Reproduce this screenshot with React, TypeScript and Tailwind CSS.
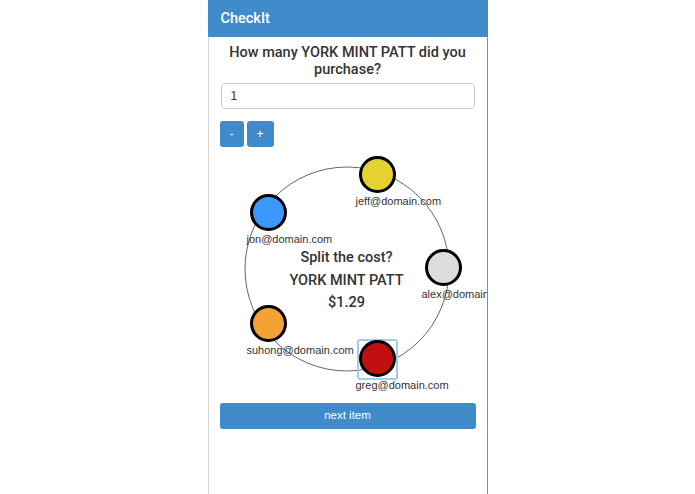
import React from 'react';

type Person = {
  email: string;
  color: string;
  left: number;
  top: number;
  selected?: boolean;
};

const PEOPLE: Person[] = [
  { email: 'jeff@domain.com', color: '#e5d231', left: 150, top: 1 },
  { email: 'jon@domain.com', color: '#3b99fb', left: 41, top: 39 },
  { email: 'alex@domain.com', color: '#dcdcdc', left: 216, top: 94 },
  { email: 'suhong@domain.com', color: '#f4a236', left: 41, top: 150 },
  { email: 'greg@domain.com', color: '#c20f0f', left: 150, top: 185, selected: true },
];

function PersonNode({ person }: { person: Person }) {
  return (
    <>
      {person.selected && (
        <div
          className="absolute h-[41px] w-[41px] rounded-[3px] border-2 border-[#a7c9ec]"
          style={{ left: person.left - 2, top: person.top - 1 }}
        />
      )}
      <div
        className="absolute h-[37px] w-[37px] rounded-full border-[3px] border-black"
        style={{ left: person.left, top: person.top, backgroundColor: person.color }}
      />
      <div
        className="absolute whitespace-nowrap text-[11px] leading-[13px] text-[#333]"
        style={{ left: person.left - 3, top: person.top + 39 }}
      >
        {person.email}
      </div>
    </>
  );
}

export default function App() {
  return (
    <div className="mx-auto flex min-h-screen w-[280px] flex-col font-['Liberation_Sans',Arial,sans-serif] text-[#333]">
      <header className="flex h-[37px] items-center bg-[#428bca] pl-[13px] font-['Roboto',sans-serif] text-[14.5px] font-medium text-white">
        CheckIt
      </header>

      <main className="flex flex-1 flex-col border-l border-r border-l-[#d4d4d4] border-r-[#8c8c8c] px-[12px] pt-[7px]">
        <h1 className="text-center font-['Roboto',sans-serif] text-[14.5px] font-medium leading-[17px]">
          How many YORK MINT PATT did you purchase?
        </h1>

        <input
          className="mt-[5px] h-[26px] w-full rounded-[4px] border border-[#cccccc] px-[9px] text-[12px] text-[#333] outline-none"
          defaultValue="1"
          readOnly
        />

        <div className="mt-[12px] flex gap-[3px] -ml-px">
          <button className="h-[26px] w-[24px] rounded-[3px] bg-[#428bca] text-[12px] text-white">-</button>
          <button className="h-[26px] w-[27px] rounded-[3px] bg-[#428bca] text-[12px] text-white">+</button>
        </div>

        <div className="relative -mx-[12px] mt-[8px] h-[240px] overflow-hidden">
          <svg className="absolute left-0 top-0" width="278" height="240" viewBox="0 0 278 240">
            <circle cx="138" cy="114" r="102" fill="none" stroke="#666" strokeWidth="1" />
          </svg>

          <div className="absolute left-0 top-[92px] w-[276px] text-center font-['Roboto',sans-serif] text-[14.5px] font-medium leading-[22.5px]">
            <div>Split the cost?</div>
            <div>YORK MINT PATT</div>
            <div>$1.29</div>
          </div>

          {PEOPLE.map((person) => (
            <PersonNode key={person.email} person={person} />
          ))}
        </div>

        <button className="-ml-px mt-[8px] h-[26px] w-[256px] rounded-[3px] bg-[#428bca] text-[11.5px] text-white">
          next item
        </button>
      </main>
    </div>
  );
}
